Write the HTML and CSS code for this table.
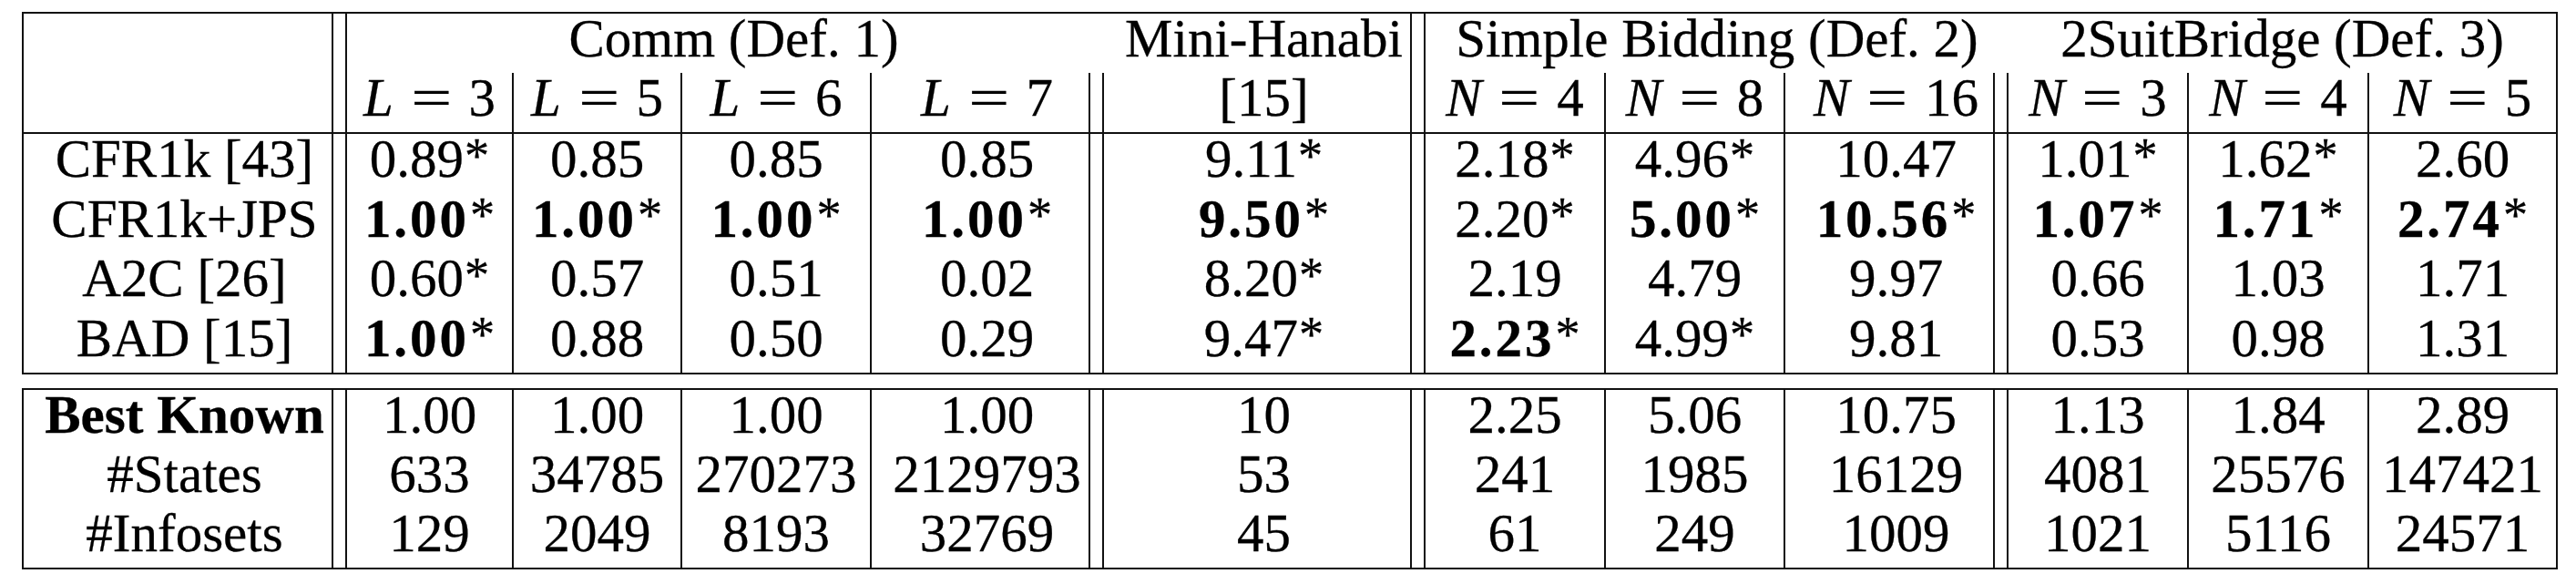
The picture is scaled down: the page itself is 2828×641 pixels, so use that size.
FILE: index.html
```html
<!DOCTYPE html>
<html lang="en">
<head>
    <meta charset="UTF-8">
    <title>Results</title>
    <link rel="stylesheet" href="styles.css">
</head>
<body>
    <table class="grid">
        <colgroup>
            <col class="w-lab"><col class="w-l3"><col class="w-l5"><col class="w-l6"><col class="w-l7"><col class="w-mh">
            <col class="w-n4"><col class="w-n8"><col class="w-n16"><col class="w-b3"><col class="w-b4"><col class="w-b5">
        </colgroup>
        <thead>
            <tr class="top">
                <td class="lab d" rowspan="2"></td>
                <td class="comm" colspan="4">Comm (Def. 1)</td>
                <td class="d">Mini-Hanabi</td>
                <td colspan="3">Simple Bidding (Def. 2)</td>
                <td colspan="3">2SuitBridge (Def. 3)</td>
            </tr>
            <tr class="sub">
                <td class="s"><i>L</i><span class="eq">=</span>3</td>
                <td class="s"><i>L</i><span class="eq">=</span>5</td>
                <td class="s"><i>L</i><span class="eq">=</span>6</td>
                <td class="d"><i>L</i><span class="eq">=</span>7</td>
                <td class="d">[15]</td>
                <td class="s"><i>N</i><span class="eq">=</span>4</td>
                <td class="s"><i>N</i><span class="eq">=</span>8</td>
                <td class="d"><i>N</i><span class="eq">=</span>16</td>
                <td class="s"><i>N</i><span class="eq">=</span>3</td>
                <td class="s"><i>N</i><span class="eq">=</span>4</td>
                <td><i>N</i><span class="eq">=</span>5</td>
            </tr>
        </thead>
        <tbody class="res">
            <tr>
                <td>CFR1k [43]</td>
                <td>0.89<sup>*</sup></td><td>0.85</td><td>0.85</td><td>0.85</td>
                <td>9.11<sup>*</sup></td>
                <td>2.18<sup>*</sup></td><td>4.96<sup>*</sup></td><td>10.47</td>
                <td>1.01<sup>*</sup></td><td>1.62<sup>*</sup></td><td>2.60</td>
            </tr>
            <tr>
                <td>CFR1k+JPS</td>
                <td><b class="m">1.00</b><sup>*</sup></td><td><b class="m">1.00</b><sup>*</sup></td><td><b class="m">1.00</b><sup>*</sup></td><td><b class="m">1.00</b><sup>*</sup></td>
                <td><b class="m">9.50</b><sup>*</sup></td>
                <td>2.20<sup>*</sup></td><td><b class="m">5.00</b><sup>*</sup></td><td><b class="m">10.56</b><sup>*</sup></td>
                <td><b class="m">1.07</b><sup>*</sup></td><td><b class="m">1.71</b><sup>*</sup></td><td><b class="m">2.74</b><sup>*</sup></td>
            </tr>
            <tr>
                <td>A2C [26]</td>
                <td>0.60<sup>*</sup></td><td>0.57</td><td>0.51</td><td>0.02</td>
                <td>8.20<sup>*</sup></td>
                <td>2.19</td><td>4.79</td><td>9.97</td>
                <td>0.66</td><td>1.03</td><td>1.71</td>
            </tr>
            <tr>
                <td>BAD [15]</td>
                <td><b class="m">1.00</b><sup>*</sup></td><td>0.88</td><td>0.50</td><td>0.29</td>
                <td>9.47<sup>*</sup></td>
                <td><b class="m">2.23</b><sup>*</sup></td><td>4.99<sup>*</sup></td><td>9.81</td>
                <td>0.53</td><td>0.98</td><td>1.31</td>
            </tr>
        </tbody>
    </table>

    <table class="grid">
        <colgroup>
            <col class="w-lab"><col class="w-l3"><col class="w-l5"><col class="w-l6"><col class="w-l7"><col class="w-mh">
            <col class="w-n4"><col class="w-n8"><col class="w-n16"><col class="w-b3"><col class="w-b4"><col class="w-b5">
        </colgroup>
        <tbody class="ref">
            <tr>
                <td><b>Best Known</b></td>
                <td>1.00</td><td>1.00</td><td>1.00</td><td>1.00</td>
                <td>10</td>
                <td>2.25</td><td>5.06</td><td>10.75</td>
                <td>1.13</td><td>1.84</td><td>2.89</td>
            </tr>
            <tr>
                <td>#States</td>
                <td>633</td><td>34785</td><td>270273</td><td>2129793</td>
                <td>53</td>
                <td>241</td><td>1985</td><td>16129</td>
                <td>4081</td><td>25576</td><td>147421</td>
            </tr>
            <tr>
                <td>#Infosets</td>
                <td>129</td><td>2049</td><td>8193</td><td>32769</td>
                <td>45</td>
                <td>61</td><td>249</td><td>1009</td>
                <td>1021</td><td>5116</td><td>24571</td>
            </tr>
        </tbody>
    </table>
</body>
</html>
```

FILE: styles.css
```css
body{
    margin: 0;
    padding: 13px 0 0 24px;
    background: #fff;
    color: #000;
    font-family: "Liberation Serif", "Times New Roman", serif;
    font-size: 59px;
}

/* table frame */
.grid{
    border-collapse: separate;
    border-spacing: 0;
    table-layout: fixed;
    width: 2784px;
    border: 2px solid #111;
}
.grid + .grid{
    margin-top: 15px;
}
.grid td{
    box-sizing: border-box;
    height: 65px;
    padding: 0;
    line-height: 54px;
    text-align: center;
    vertical-align: top;
    white-space: nowrap;
    -webkit-text-stroke: 0.3px #000;
}

/* column widths (border included) */
.w-lab{ width: 355px; }
.w-l3{ width: 183px; }
.w-l5{ width: 185px; }
.w-l6{ width: 208px; }
.w-l7{ width: 255px; }
.w-mh{ width: 353px; }
.w-n4{ width: 198px; }
.w-n8{ width: 197px; }
.w-n16{ width: 245px; }
.w-b3{ width: 198px; }
.w-b4{ width: 198px; }
.w-b5{ width: 205px; }

/* vertical rules */
.grid td.s,
.res td,
.ref td{
    border-right: 2px solid #111;
}
.res td:last-child,
.ref td:last-child{
    border-right: 0;
}
.grid td.d,
.res td:nth-child(1),
.res td:nth-child(5),
.res td:nth-child(6),
.res td:nth-child(9),
.ref td:nth-child(1),
.ref td:nth-child(5),
.ref td:nth-child(6),
.ref td:nth-child(9){
    border-right: 2px solid #111;
    background: linear-gradient(to left, transparent 13px, #111 13px, #111 15px, transparent 15px) no-repeat;
}

/* header */
.top td.lab{
    height: auto;
    border-bottom: 2px solid #111;
}
.sub td{
    height: 67px;
    border-bottom: 2px solid #111;
}
.comm{
    padding-left: 18px !important;
}
.res td{
    height: 65.5px;
}

/* math bits */
i{
    font-style: italic;
}
.eq{
    display: inline-block;
    margin: 0 0.42em;
    transform: scaleX(1.35);
}
.m{
    font-weight: bold;
    letter-spacing: 0.05em;
}
sup{
    font-size: 0.92em;
    line-height: 0;
    vertical-align: 0.1em;
    font-weight: normal;
    margin-left: 1px;
}
```
